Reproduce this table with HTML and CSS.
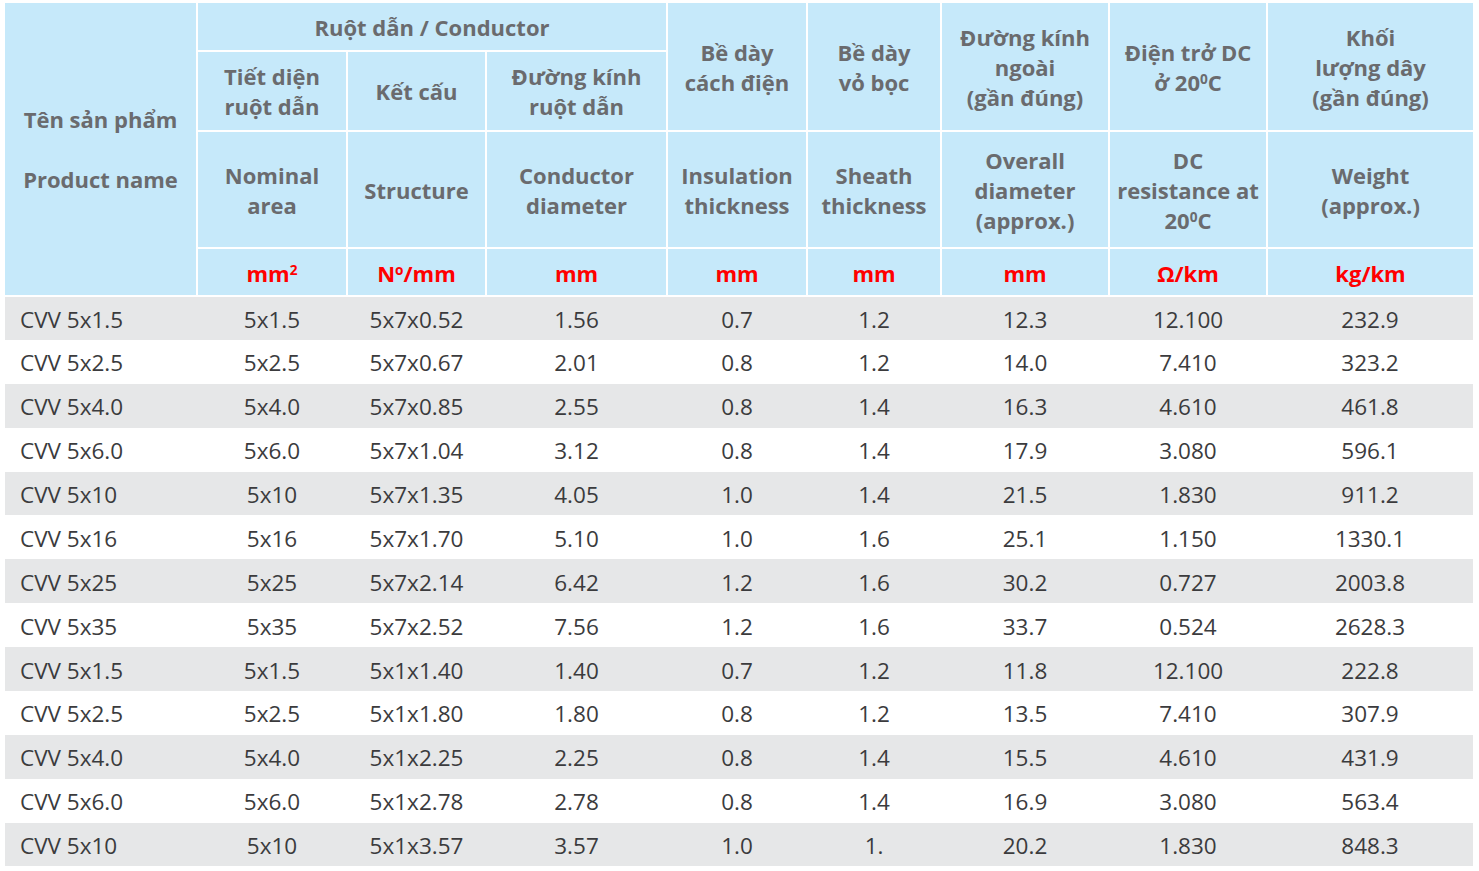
FILE: index.html
```html
<!DOCTYPE html>
<html lang="vi">
<head>
<meta charset="utf-8">
<title>CVV 5 lõi</title>
<link rel="stylesheet" href="styles.css">
</head>
<body>
<table class="spec">
  <colgroup>
    <col class="c1"><col class="c2"><col class="c3"><col class="c4"><col class="c5"><col class="c6"><col class="c7"><col class="c8"><col class="c9">
  </colgroup>
  <thead>
    <tr class="h1">
      <th rowspan="4">Tên sản phẩm<br><br>Product name</th>
      <th colspan="3">Ruột dẫn / Conductor</th>
      <th rowspan="2">Bề dày<br>cách điện</th>
      <th rowspan="2">Bề dày<br>vỏ bọc</th>
      <th rowspan="2">Đường kính<br>ngoài<br>(gần đúng)</th>
      <th rowspan="2">Điện trở DC<br>ở 20<sup>0</sup>C</th>
      <th rowspan="2">Khối<br>lượng dây<br>(gần đúng)</th>
    </tr>
    <tr class="h2">
      <th>Tiết diện<br>ruột dẫn</th>
      <th>Kết cấu</th>
      <th>Đường kính<br>ruột dẫn</th>
    </tr>
    <tr class="h3">
      <th>Nominal<br>area</th>
      <th>Structure</th>
      <th>Conductor<br>diameter</th>
      <th>Insulation<br>thickness</th>
      <th>Sheath<br>thickness</th>
      <th>Overall<br>diameter<br>(approx.)</th>
      <th>DC<br>resistance at<br>20<sup>0</sup>C</th>
      <th>Weight<br>(approx.)</th>
    </tr>
    <tr class="h4 units">
      <th>mm<sup>2</sup></th>
      <th>N<sup>o</sup>/mm</th>
      <th>mm</th>
      <th>mm</th>
      <th>mm</th>
      <th>mm</th>
      <th>Ω/km</th>
      <th>kg/km</th>
    </tr>
  </thead>
  <tbody>
    <tr><td>CVV 5x1.5</td><td>5x1.5</td><td>5x7x0.52</td><td>1.56</td><td>0.7</td><td>1.2</td><td>12.3</td><td>12.100</td><td>232.9</td></tr>
    <tr><td>CVV 5x2.5</td><td>5x2.5</td><td>5x7x0.67</td><td>2.01</td><td>0.8</td><td>1.2</td><td>14.0</td><td>7.410</td><td>323.2</td></tr>
    <tr><td>CVV 5x4.0</td><td>5x4.0</td><td>5x7x0.85</td><td>2.55</td><td>0.8</td><td>1.4</td><td>16.3</td><td>4.610</td><td>461.8</td></tr>
    <tr><td>CVV 5x6.0</td><td>5x6.0</td><td>5x7x1.04</td><td>3.12</td><td>0.8</td><td>1.4</td><td>17.9</td><td>3.080</td><td>596.1</td></tr>
    <tr><td>CVV 5x10</td><td>5x10</td><td>5x7x1.35</td><td>4.05</td><td>1.0</td><td>1.4</td><td>21.5</td><td>1.830</td><td>911.2</td></tr>
    <tr><td>CVV 5x16</td><td>5x16</td><td>5x7x1.70</td><td>5.10</td><td>1.0</td><td>1.6</td><td>25.1</td><td>1.150</td><td>1330.1</td></tr>
    <tr><td>CVV 5x25</td><td>5x25</td><td>5x7x2.14</td><td>6.42</td><td>1.2</td><td>1.6</td><td>30.2</td><td>0.727</td><td>2003.8</td></tr>
    <tr><td>CVV 5x35</td><td>5x35</td><td>5x7x2.52</td><td>7.56</td><td>1.2</td><td>1.6</td><td>33.7</td><td>0.524</td><td>2628.3</td></tr>
    <tr><td>CVV 5x1.5</td><td>5x1.5</td><td>5x1x1.40</td><td>1.40</td><td>0.7</td><td>1.2</td><td>11.8</td><td>12.100</td><td>222.8</td></tr>
    <tr><td>CVV 5x2.5</td><td>5x2.5</td><td>5x1x1.80</td><td>1.80</td><td>0.8</td><td>1.2</td><td>13.5</td><td>7.410</td><td>307.9</td></tr>
    <tr><td>CVV 5x4.0</td><td>5x4.0</td><td>5x1x2.25</td><td>2.25</td><td>0.8</td><td>1.4</td><td>15.5</td><td>4.610</td><td>431.9</td></tr>
    <tr><td>CVV 5x6.0</td><td>5x6.0</td><td>5x1x2.78</td><td>2.78</td><td>0.8</td><td>1.4</td><td>16.9</td><td>3.080</td><td>563.4</td></tr>
    <tr><td>CVV 5x10</td><td>5x10</td><td>5x1x3.57</td><td>3.57</td><td>1.0</td><td>1.</td><td>20.2</td><td>1.830</td><td>848.3</td></tr>
  </tbody>
</table>
</body>
</html>
```
FILE: styles.css
```css
html, body {
  margin: 0;
  padding: 0;
  background: #ffffff;
}

body {
  padding: 1px 0 0 3px;
  font-family: "Open Sans", "Noto Sans", sans-serif;
}

.spec {
  border-collapse: collapse;
  table-layout: fixed;
  width: 1470px;
  border: 2px solid #ffffff;
}

.c1 { width: 193px; }
.c2 { width: 150px; }
.c3 { width: 139px; }
.c4 { width: 181px; }
.c5 { width: 140px; }
.c6 { width: 134px; }
.c7 { width: 168px; }
.c8 { width: 158px; }
.c9 { width: 207px; }

.spec th {
  background: #c6e9fa;
  color: #6a6b6e;
  font-weight: 700;
  font-size: 22px;
  line-height: 30px;
  letter-spacing: 0;
  border: 2px solid #ffffff;
  padding: 0;
  text-align: center;
  vertical-align: middle;
  white-space: nowrap;
}

.spec th sup {
  font-size: 0.62em;
  line-height: 0;
  vertical-align: 0.55em;
}

.h1 { height: 49px; }
.h2 { height: 80px; }
.h3 { height: 117px; }
.h4 { height: 48px; }

.units th {
  color: #ff0000;
  padding-top: 2px;
}

.spec tbody tr {
  height: 43.9px;
}

.spec td {
  padding: 3px 0 0 0;
  font-size: 22.5px;
  line-height: 30px;
  color: #3b3b3d;
  text-align: center;
  vertical-align: middle;
  letter-spacing: 0;
  white-space: nowrap;
  font-kerning: none;
}

.spec td:first-child {
  text-align: left;
  padding-left: 15px;
}

.spec tbody tr:nth-child(odd) td {
  background: #e6e7e8;
}
```
